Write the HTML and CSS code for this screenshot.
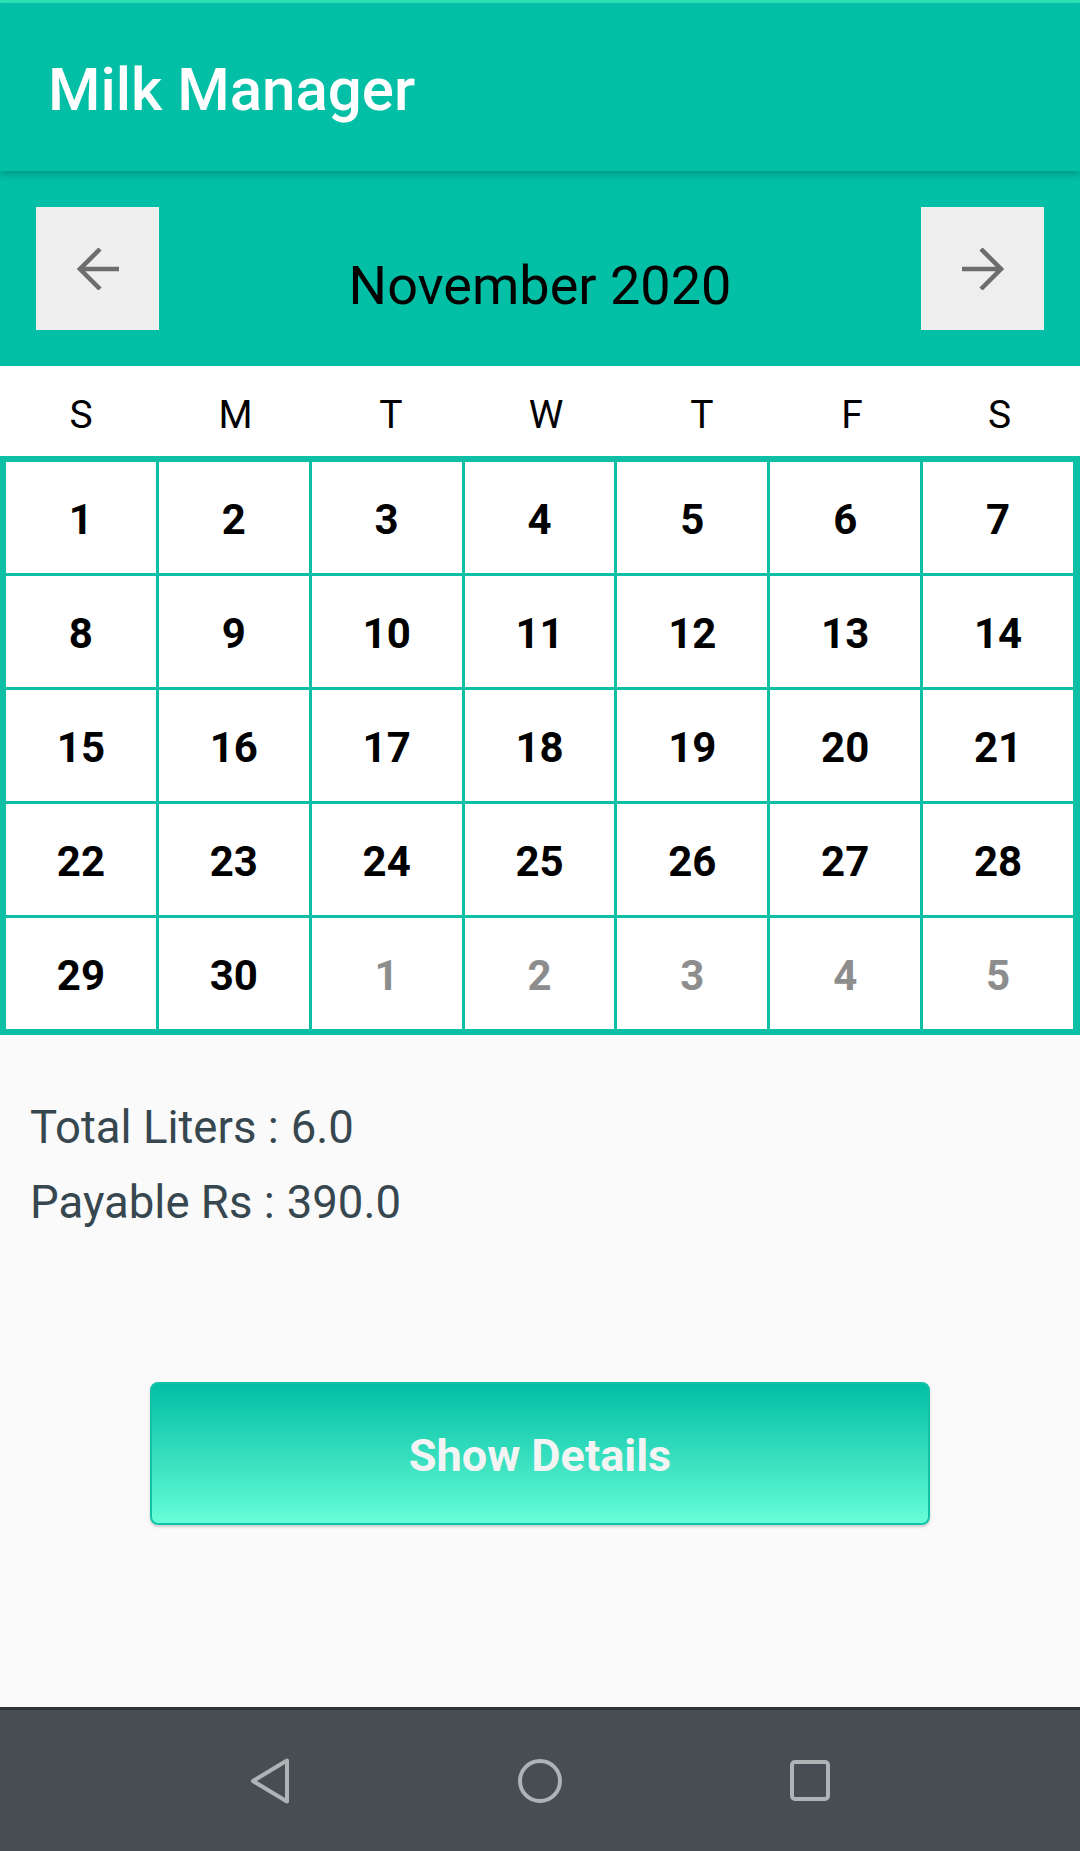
FILE: index.html
```html
<!DOCTYPE html>
<html lang="en">
<head>
<meta charset="utf-8">
<title>Milk Manager</title>
<link rel="stylesheet" href="styles.css">
</head>
<body>
<div class="screen">
  <div class="status"></div>
  <header class="appbar"><h1 class="title">Milk Manager</h1></header>
  <section class="month-bar">
    <button class="nav-btn" aria-label="Previous month">
      <svg width="42" height="42" viewBox="0 0 42 42"><path d="M42 21H3M23 1L3 21L23 41" fill="none" stroke="#6d6d6d" stroke-width="4.5"/></svg>
    </button>
    <div class="month">November 2020</div>
    <button class="nav-btn" aria-label="Next month">
      <svg width="42" height="42" viewBox="0 0 42 42"><path d="M0 21H39M19 1L39 21L19 41" fill="none" stroke="#6d6d6d" stroke-width="4.5"/></svg>
    </button>
  </section>
  <div class="weekdays">
    <span>S</span><span>M</span><span>T</span><span>W</span><span>T</span><span>F</span><span>S</span>
  </div>
  <div class="days">
    <div class="day">1</div><div class="day">2</div><div class="day">3</div><div class="day">4</div><div class="day">5</div><div class="day">6</div><div class="day">7</div>
    <div class="day">8</div><div class="day">9</div><div class="day">10</div><div class="day">11</div><div class="day">12</div><div class="day">13</div><div class="day">14</div>
    <div class="day">15</div><div class="day">16</div><div class="day">17</div><div class="day">18</div><div class="day">19</div><div class="day">20</div><div class="day">21</div>
    <div class="day">22</div><div class="day">23</div><div class="day">24</div><div class="day">25</div><div class="day">26</div><div class="day">27</div><div class="day">28</div>
    <div class="day">29</div><div class="day">30</div><div class="day other">1</div><div class="day other">2</div><div class="day other">3</div><div class="day other">4</div><div class="day other">5</div>
  </div>
  <main class="summary">
    <p class="line"><span class="label">Total Liters :</span><span class="value">6.0</span></p>
    <p class="line"><span class="label">Payable Rs :</span><span class="value">390.0</span></p>
    <button class="details">Show Details</button>
  </main>
  <nav class="sysnav">
    <span class="sys-item">
      <svg width="52" height="52" viewBox="0 0 52 52"><path d="M9 26L43 5.5V46.5Z" fill="none" stroke="#aeb3b5" stroke-width="4" stroke-linejoin="round"/></svg>
    </span>
    <span class="sys-item">
      <svg width="52" height="52" viewBox="0 0 52 52"><circle cx="26" cy="26" r="20" fill="none" stroke="#aeb3b5" stroke-width="4"/></svg>
    </span>
    <span class="sys-item">
      <svg width="52" height="52" viewBox="0 0 52 52"><rect x="8" y="7" width="36" height="37" rx="3" fill="none" stroke="#aeb3b5" stroke-width="4"/></svg>
    </span>
  </nav>
</div>
</body>
</html>
```
FILE: styles.css
```css
* {
  box-sizing: border-box;
}

html, body {
  margin: 0;
  padding: 0;
}

body {
  font-family: Roboto, "Noto Sans", "Liberation Sans", sans-serif;
  background: #fafafa;
}

.screen {
  width: 1080px;
  height: 1851px;
  display: flex;
  flex-direction: column;
  overflow: hidden;
}

.status {
  height: 3px;
  background: #2de5b8;
}

.appbar {
  height: 168px;
  background: #03bfa5;
  display: flex;
  align-items: center;
  padding-left: 48px;
  padding-top: 4px;
  position: relative;
  z-index: 2;
  box-shadow: 0 3px 8px rgba(0, 0, 0, 0.22);
}

.title {
  margin: 0;
  font-size: 60px;
  font-weight: 500;
  color: #ffffff;
  line-height: normal;
}

.month-bar {
  height: 195px;
  background: #03bfa5;
  display: flex;
  align-items: center;
  justify-content: space-between;
  padding: 0 36px;
}

.nav-btn {
  width: 123px;
  height: 123px;
  border: none;
  padding: 0;
  background: #eeeeee;
  display: flex;
  align-items: center;
  justify-content: center;
}

.month {
  font-size: 54px;
  color: #000000;
  padding-top: 34px;
  line-height: normal;
}

.weekdays {
  height: 90px;
  background: #ffffff;
  display: grid;
  grid-template-columns: 162px 147px 164px 146px 166px 134px 161px;
  align-items: center;
  padding: 7px 0 0 0;
  font-size: 39px;
  color: #000000;
  text-align: center;
}

.days {
  display: grid;
  grid-template-columns: repeat(7, 1fr);
  grid-auto-rows: 111px;
  gap: 3px;
  padding: 6px 7px 6px 6px;
  background: #0dbfa5;
}

.day {
  background: #ffffff;
  display: flex;
  align-items: center;
  justify-content: center;
  padding-top: 4px;
  font-size: 42px;
  font-weight: 700;
  color: #000000;
}

.day.other {
  color: #8d8d8d;
}

.summary {
  flex: 1;
  background: #fafafa;
  padding-top: 55px;
}

.line {
  margin: 0 0 0 30px;
  font-size: 45.5px;
  line-height: 75px;
  color: #37474f;
}

.value {
  margin-left: 12px;
}

.details {
  display: flex;
  align-items: center;
  justify-content: center;
  width: 780px;
  height: 143px;
  margin: 142px auto 0;
  border: 2px solid #12c2a6;
  border-radius: 8px;
  background: linear-gradient(to bottom, #02bfa5 0%, #3ee3c2 60%, #66ffd9 100%);
  box-shadow: 0 2px 3px rgba(0, 0, 0, 0.18);
  font-family: Roboto, "Noto Sans", sans-serif;
  font-size: 45px;
  font-weight: 700;
  color: #f4f4f4;
  padding: 4px 0 0;
}

.sysnav {
  height: 144px;
  background: #474e53;
  border-top: 3px solid #2f3336;
  display: flex;
  justify-content: center;
  align-items: center;
}

.sys-item {
  width: 270px;
  display: flex;
  justify-content: center;
  align-items: center;
}
```
